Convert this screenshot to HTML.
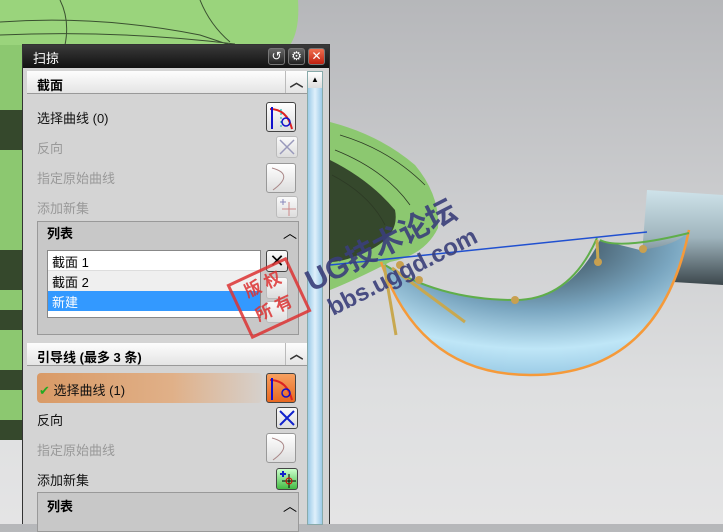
<!DOCTYPE html>
<html><head><meta charset="utf-8"><style>
*{margin:0;padding:0;box-sizing:border-box}
body{width:723px;height:524px;overflow:hidden;position:relative;font-family:"Liberation Sans","Noto Sans CJK SC",sans-serif;font-size:12px;background:linear-gradient(#b6b7ba 0%,#cfd0d2 45%,#dedfe0 75%,#e4e4e5 100%)}
.a{position:absolute}
.dlg{left:22px;top:44px;width:308px;height:480px;background:#d4d4d4;border:1px solid #333;border-bottom:none}
.tt{left:0;top:0;width:306px;height:23px;background:linear-gradient(#3a3a3a,#111);color:#fff;font-size:13px;padding:3px 10px}
.tb{top:3px;width:17px;height:17px;border:1px solid #777;border-radius:3px;background:linear-gradient(#666,#222);color:#fff;font-size:12px;text-align:center;line-height:15px}
.hdr{left:4px;width:280px;height:23px;background:linear-gradient(#fdfdfd,#e4e4e4);border-bottom:1px solid #999;font-weight:bold;font-size:13px;padding:4px 10px}
.car{position:absolute;right:0;top:0;width:22px;height:22px;border-left:1px solid #bbb;text-align:center;font-size:14px;line-height:22px;color:#333}
.lb{left:14px;font-size:13px;color:#111}
.dis{color:#999}
.ib{width:22px;height:22px;border:1px solid #bbb;border-radius:3px;background:linear-gradient(#fafafa,#ddd)}
.ibl{width:30px;height:30px;border:1px solid #999;border-radius:3px;background:linear-gradient(#fff,#ddd)}
</style></head><body>
<svg class="a" style="left:0;top:0" width="723" height="524">
<defs>
<linearGradient id="cy" x1="0" y1="0" x2="0" y2="1"><stop offset="0" stop-color="#cfe3ea"/><stop offset=".5" stop-color="#9fb4bd"/><stop offset="1" stop-color="#3c474c"/></linearGradient>
<radialGradient id="pp" cx=".5" cy=".1" r=".9"><stop offset="0" stop-color="#2c3a44"/><stop offset=".5" stop-color="#7aa6c0"/><stop offset=".8" stop-color="#bfe6f7"/><stop offset="1" stop-color="#9ccce6"/></radialGradient>
</defs>
<path d="M0 0H298Q300 30 290 45H0Z" fill="#9ad47c"/>
<path d="M0 22Q100 15 200 35L230 45M60 0Q70 20 65 45M200 0Q210 25 230 42M0 35Q120 30 235 44" stroke="#3a5030" fill="none" stroke-width="1"/>
<path d="M0 45H22V440H0Z" fill="#8cc870"/>
<path d="M0 110H22V150H0ZM0 250H22V290H0ZM0 310H22V330H0ZM0 370H22V390H0ZM0 420H22V440H0Z" fill="#35482c"/>
<path d="M330 122Q380 135 415 165Q440 195 438 228Q425 255 390 262Q355 280 330 290Z" fill="#8cc870"/>
<path d="M330 160Q370 180 395 210Q400 235 370 250Q345 262 330 262Z" fill="#35482c"/>
<path d="M340 135Q390 150 425 185M335 150Q385 170 410 205M332 175Q370 195 385 225" stroke="#2d3a25" fill="none" stroke-width=".8"/>
<path d="M647 190L723 195V285L640 280Z" fill="url(#cy)"/>
<path d="M381 262Q420 375 530 375Q660 375 689 230Q680 245 640 250L600 240Q570 300 515 300Q440 300 385 265Z" fill="url(#pp)"/>
<path d="M381 262Q420 375 530 375Q660 375 689 230" fill="none" stroke="#f59a3a" stroke-width="2.5"/>
<path d="M385 265Q440 300 515 300Q570 300 597 238M600 240Q620 250 689 233" fill="none" stroke="#5fae4a" stroke-width="2"/>
<path d="M330 265L647 232" stroke="#2050d0" stroke-width="1.5"/>
<path d="M384 265L396 335M392 268L465 322M597 240L598 262" stroke="#c8a850" stroke-width="3"/>
<g fill="#c8a050"><circle cx="400" cy="265" r="4"/><circle cx="419" cy="280" r="4"/><circle cx="515" cy="300" r="4"/><circle cx="598" cy="262" r="4"/><circle cx="643" cy="249" r="4"/></g>
</svg>
<div class="a dlg">
<div class="a tt">扫掠</div>
<div class="a tb" style="left:245px">↺</div>
<div class="a tb" style="left:265px">⚙</div>
<div class="a tb" style="left:285px;background:linear-gradient(#f07050,#c02010)">✕</div>
<div class="a" style="left:284px;top:26px;width:16px;height:454px;background:linear-gradient(90deg,#9ccbe8,#dff0fb,#9ccbe8);border:1px solid #8aa"></div>
<div class="a" style="left:285px;top:27px;width:14px;height:16px;background:linear-gradient(#fff,#ddd);font-size:8px;text-align:center;line-height:16px">▲</div>
<div class="a hdr" style="top:26px">截面<div class="car">︿</div></div>
<div class="a lb" style="top:63px">选择曲线 (0)</div>
<div class="a ibl" style="left:243px;top:57px;border-color:#444"><svg width="28" height="28"><path d="M3 6Q20 6 25 26" stroke="#d22" stroke-width="2" fill="none"/><path d="M5 4V26" stroke="#11c" stroke-width="2"/><path d="M14 6V26" stroke="#0aa" stroke-dasharray="2 2"/><circle cx="19" cy="19" r="4" stroke="#11c" fill="none" stroke-width="1.5"/></svg></div>
<div class="a lb dis" style="top:93px">反向</div>
<div class="a ib" style="left:253px;top:91px"><svg width="20" height="20"><path d="M3 17L17 3M3 3L17 17" stroke="#99b" stroke-width="1.5"/></svg></div>
<div class="a lb dis" style="top:123px">指定原始曲线</div>
<div class="a ibl" style="left:243px;top:118px"><svg width="28" height="28"><path d="M5 4Q28 10 6 26" stroke="#a88" fill="none"/></svg></div>
<div class="a lb dis" style="top:153px">添加新集</div>
<div class="a ib" style="left:253px;top:151px"><svg width="20" height="20"><path d="M12 5V19M5 12H19" stroke="#c88"/><path d="M6 2V8M3 5H9" stroke="#88b"/></svg></div>
<div class="a" style="left:14px;top:176px;width:262px;height:114px;border:1px solid #999;background:#c8c8c8"></div>
<div class="a" style="left:24px;top:178px;font-weight:bold;font-size:13px">列表</div>
<div class="a" style="left:260px;top:178px;font-size:14px">︿</div>
<div class="a" style="left:24px;top:205px;width:214px;height:68px;background:#fff;border:1px solid #888;font-size:13px">
<div style="height:20px;padding:1px 4px;border-bottom:1px solid #ddd">截面 1</div>
<div style="height:20px;padding:1px 4px;background:#efefef">截面 2</div>
<div style="height:20px;padding:1px 4px;background:#3399ff;color:#fff">新建</div></div>
<div class="a ib" style="left:243px;top:205px;font-size:18px;text-align:center;line-height:20px;border-color:#444">✕</div>
<div class="a ib" style="left:243px;top:232px"></div>
<div class="a ib" style="left:243px;top:256px"></div>
<div class="a hdr" style="top:298px">引导线 (最多 3 条)<div class="car">︿</div></div>
<div class="a" style="left:14px;top:328px;width:225px;height:30px;border-radius:4px;background:linear-gradient(90deg,#d99a66,#e0b088 60%,#d6d0cb)"></div>
<div class="a lb" style="top:335px;left:16px"><span style="color:#2a2">✔</span> 选择曲线 (1)</div>
<div class="a ibl" style="left:243px;top:328px;background:linear-gradient(#f7a060,#e86820);border-color:#444"><svg width="28" height="28"><path d="M3 6Q20 6 25 26" stroke="#d22" stroke-width="2" fill="none"/><path d="M5 4V26" stroke="#11c" stroke-width="2"/><circle cx="19" cy="19" r="4" stroke="#11c" fill="none" stroke-width="1.5"/></svg></div>
<div class="a lb" style="top:365px">反向</div>
<div class="a ib" style="left:253px;top:362px;border-color:#444"><svg width="20" height="20"><path d="M3 17L17 3M3 3L17 17" stroke="#12c" stroke-width="2"/></svg></div>
<div class="a lb dis" style="top:395px">指定原始曲线</div>
<div class="a ibl" style="left:243px;top:388px"><svg width="28" height="28"><path d="M5 4Q28 10 6 26" stroke="#a88" fill="none"/></svg></div>
<div class="a lb" style="top:425px">添加新集</div>
<div class="a ib" style="left:253px;top:423px;background:linear-gradient(#cfc,#4b4);border-color:#444"><svg width="20" height="20"><path d="M12 5V19M5 12H19" stroke="#000"/><circle cx="12" cy="12" r="3" stroke="#d00" fill="none"/><path d="M6 2V8M3 5H9" stroke="#12c" stroke-width="2"/></svg></div>
<div class="a" style="left:14px;top:447px;width:262px;height:40px;border:1px solid #999;background:#c8c8c8"></div>
<div class="a" style="left:24px;top:451px;font-weight:bold;font-size:13px">列表</div>
<div class="a" style="left:260px;top:451px;font-size:14px">︿</div>
</div>
<svg class="a" style="left:0;top:0" width="723" height="524">
<g font-family="Liberation Sans,Noto Sans CJK SC,sans-serif" font-weight="bold" fill="#3a3f7a" opacity=".9">
<text x="312" y="292" font-size="30" transform="rotate(-27 312 292)">UG技术论坛</text>
<text x="333" y="316" font-size="24" transform="rotate(-27 333 316)">bbs.uggd.com</text></g>
</svg>
<div class="a" style="left:236px;top:268px;width:66px;height:60px;border:3px solid #d33;transform:rotate(-25deg);color:#d33;font-size:17px;font-weight:bold;line-height:26px;text-align:center;opacity:.85">版 权<br>所 有</div>
</body></html>
